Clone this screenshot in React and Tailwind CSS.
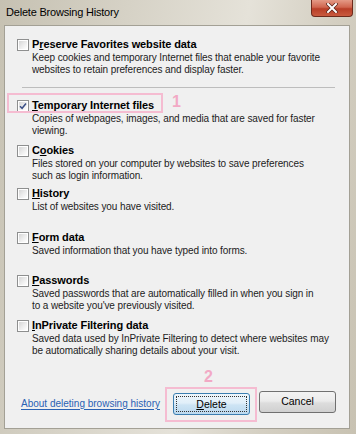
import React from 'react'

const font = "font-['Liberation_Sans',Arial,sans-serif]"

function Checkbox({ checked }) {
  return (
    <div className="w-[12px] h-[12px] shrink-0 border border-[#8e8f8f] bg-white p-[1px]">
      <div className="relative w-full h-full bg-gradient-to-br from-[#d6d6d6] via-[#ececec] to-white">
        {checked && (
          <svg viewBox="0 0 8 8" className="absolute inset-0 w-full h-full">
            <path d="M1 4.2 L3.1 6.3 L7 1.6" fill="none" stroke="#3b4f86" strokeWidth="1.5" />
          </svg>
        )}
      </div>
    </div>
  )
}

function Item({ label, lines, checked, className = '', children }) {
  return (
    <div className={`relative ${className}`}>
      {children}
      <div className="flex h-[15px] items-center gap-[3px] pl-[12px]">
        <Checkbox checked={checked} />
        <span className="text-[11px] font-bold text-black whitespace-nowrap tracking-[-0.1px]">{label}</span>
      </div>
      <div className="pl-[27px] text-[10px] leading-[12px] text-[#1c1c1c] tracking-[-0.1px]">
        {lines.map((l, i) => (
          <div key={i} className="whitespace-nowrap">{l}</div>
        ))}
      </div>
    </div>
  )
}

const items = [
  {
    label: <>C<u>o</u>okies</>,
    lines: ['Files stored on your computer by websites to save preferences', 'such as login information.'],
    h: 'h-[43px]',
  },
  {
    label: <><u>H</u>istory</>,
    lines: ['List of websites you have visited.'],
    h: 'h-[44px]',
  },
  {
    label: <><u>F</u>orm data</>,
    lines: ['Saved information that you have typed into forms.'],
    h: 'h-[43px]',
  },
  {
    label: <><u>P</u>asswords</>,
    lines: ['Saved passwords that are automatically filled in when you sign in', "to a website you've previously visited."],
    h: 'h-[45px]',
  },
  {
    label: <><u>I</u>nPrivate Filtering data</>,
    lines: ['Saved data used by InPrivate Filtering to detect where websites may', 'be automatically sharing details about your visit.'],
    h: '',
  },
]

export default function App() {
  return (
    <div className={`${font} w-[356px] h-[434px] flex flex-col overflow-hidden bg-[linear-gradient(100deg,#c6c1b2_0%,#d6d2c6_30%,#e5e2d9_58%,#d4cfc2_78%,#c8c2b2_100%)]`}>
      {/* title bar */}
      <div className="h-[25px] shrink-0 flex justify-between items-start">
        <div className="pl-[6px] pt-[6px] text-[11px] leading-[13px] text-black tracking-[-0.2px]">Delete Browsing History</div>
        <div className="mr-[3px] w-[42px] h-[17px] rounded-b-[4px] border border-t-0 border-[#6e2a1c] bg-[linear-gradient(180deg,#e49a86_0%,#d0664f_45%,#b83e27_55%,#c95a3f_100%)] flex items-center justify-center">
          <svg viewBox="0 0 12 10" className="w-[12px] h-[10px]">
            <path d="M2 1 L10 9 M10 1 L2 9" stroke="#5a2218" strokeWidth="3.4" strokeLinecap="square" />
            <path d="M2 1 L10 9 M10 1 L2 9" stroke="#ffffff" strokeWidth="2" strokeLinecap="square" />
          </svg>
        </div>
      </div>

      {/* panel */}
      <div className="ml-[4px] mr-[6px] h-[404px] shrink-0 border border-[#a3a095] bg-[#f0f0f0] flex flex-col pt-[11px]">
        <Item
          label={<>P<u>r</u>eserve Favorites website data</>}
          lines={['Keep cookies and temporary Internet files that enable your favorite', 'websites to retain preferences and display faster.']}
        />
        <div className="mt-[11px] ml-[17px] w-[313px] border-t border-[#bdbdbd]" />

        <Item
          className="mt-[10px] h-[45px]"
          checked
          label={<><u>T</u>emporary Internet files</>}
          lines={['Copies of webpages, images, and media that are saved for faster', 'viewing.']}
        >
          <div className="absolute left-[2px] top-[-5px] w-[156px] h-[20px] border-2 border-[#f5bcd1]" />
          <div className="absolute left-[167px] top-[-4px] text-[16px] leading-[15px] font-bold text-[#f2a9c5]">1</div>
        </Item>

        {items.map((it, i) => (
          <Item key={i} className={it.h} label={it.label} lines={it.lines} />
        ))}

        {/* buttons */}
        <div className="mt-auto mb-[14px] flex items-center pl-[16px] pr-[13px] h-[22px]">
          <a href="#" className="text-[10px] text-[#2a62b4] underline underline-offset-[2px] whitespace-nowrap">About deleting browsing history</a>
          <div className="ml-auto flex gap-[9px]">
            <div className="relative">
              <div className="absolute left-[-8px] top-[-4px] w-[92px] h-[35px] border-2 border-[#f5bcd1]" />
              <div className="absolute left-[31px] top-[-22px] text-[16px] leading-[15px] font-bold text-[#f2a9c5]">2</div>
              <button className="relative w-[77px] h-[22px] rounded-[3px] border border-[#3c7fb1] bg-[linear-gradient(180deg,#eef6fc_0%,#e1eff9_45%,#cde4f4_55%,#bcd9ef_100%)] p-[2px]">
                <div className="w-full h-full border border-dotted border-[#333] flex items-center justify-center text-[10.5px] text-black">
                  <span><u>D</u>elete</span>
                </div>
              </button>
            </div>
            <button className="w-[77px] h-[22px] rounded-[3px] border border-[#707070] bg-[linear-gradient(180deg,#f3f3f3_0%,#ebebeb_45%,#dddddd_55%,#d0d0d0_100%)] flex items-center justify-center text-[10.5px] text-black">
              Cancel
            </button>
          </div>
        </div>
      </div>
    </div>
  )
}
